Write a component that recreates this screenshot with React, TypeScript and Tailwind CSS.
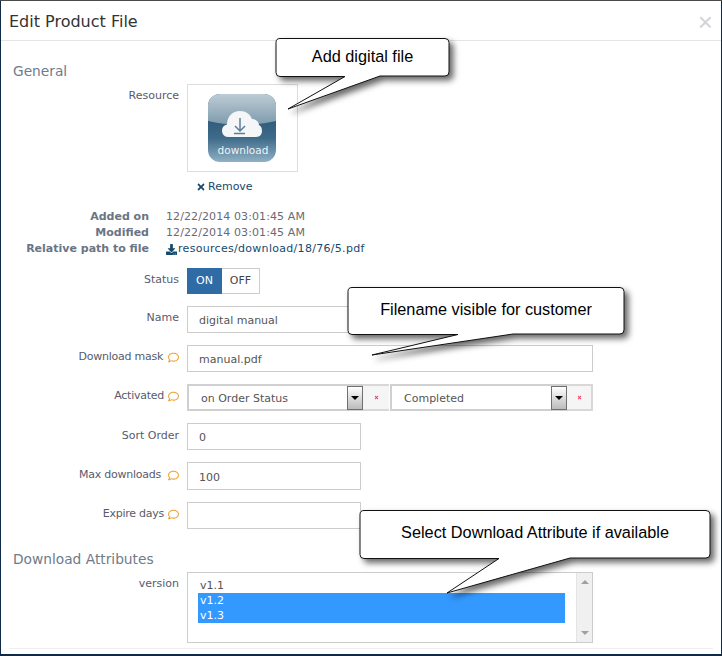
import type { ReactNode } from 'react'
import { FaDownload, FaRegComment, FaTimes } from 'react-icons/fa'

function Row({ label, hint, className, children }: { label?: string; hint?: string; className?: string; children: ReactNode }) {
  return (
    <div className={`flex ${className ?? ''}`}>
      <div className={`w-[173px] pr-[8px] h-[24px] flex items-center justify-end text-[#585b6d] shrink-0 ${hint ? 'tracking-[-0.25px]' : ''}`}>
        {label}
        {hint && <FaRegComment className={`text-[#f2a33a] ${hint}`} size={11} />}
      </div>
      {children}
    </div>
  )
}

function Input({ value, className }: { value?: string; className?: string }) {
  return (
    <div className={`h-[27px] border border-[#ccc] flex items-center px-[11px] pt-[4px] text-[#555] ${className ?? ''}`}>
      {value}
    </div>
  )
}

function SelectBox({ value, className }: { value: string; className: string }) {
  return (
    <div className={`h-[27px] border-2 border-[#d0d0d0] border-r-0 flex items-center pl-[12px] pt-[4px] text-[#555] relative ${className}`}>
      {value}
      <div className="absolute right-0 top-0 w-[16px] h-[24px] border border-[#707070] bg-gradient-to-b from-white to-[#bbb] flex items-center justify-center">
        <div className="w-0 h-0 border-x-[4px] border-x-transparent border-t-[4px] border-t-black" />
      </div>
    </div>
  )
}

function ClearCell({ className }: { className: string }) {
  return (
    <div className={`h-[27px] bg-[#f5f5f5] border-y-2 border-[#d8d8d8] flex items-center justify-center ${className}`}>
      <FaTimes className="text-[#f04060]" size={5} />
    </div>
  )
}

function DownloadIcon() {
  return (
    <svg width="68" height="68" viewBox="0 0 68 68" className="block">
      <defs>
        <linearGradient id="iconBg" x1="0" y1="0" x2="0" y2="1">
          <stop offset="0.3" stopColor="#2c5675" />
          <stop offset="0.65" stopColor="#3f6b8a" />
          <stop offset="1" stopColor="#8fb0c4" />
        </linearGradient>
        <linearGradient id="iconGloss" x1="0" y1="0" x2="0" y2="1">
          <stop offset="0" stopColor="#bdccd5" />
          <stop offset="1" stopColor="#7d9aac" />
        </linearGradient>
      </defs>
      <rect width="68" height="68" rx="12" fill="url(#iconBg)" />
      <path d="M12 0H56A12 12 0 0 1 68 12V27Q34 35 0 27V12A12 12 0 0 1 12 0z" fill="url(#iconGloss)" />
      <path d="M20 43c-4 0-6-3-6-6.500 0-3 2-5.500 5-6C19 23 24 17 32 17c6 0 10 3 12 8 4 0 7 3 7 6 2 1 3 3 3 6 0 3-2 6-6 6z" fill="#f4f6f8" />
      <path d="M32 24v13M27 32l5 5 5-5M26 39.500h11" fill="none" stroke="#5d7f96" strokeWidth="1.500" />
      <text x="35" y="60" textAnchor="middle" fontSize="10.500" fontWeight="500" fill="#eef3f6" fontFamily="'DejaVu Sans', sans-serif">download</text>
    </svg>
  )
}

function Callout({ text, left, top, width, height, tail, textClass }: { text: string; left: number; top: number; width: number; height: number; tail: [number, number, number, number]; textClass: string }) {
  const [x1, x2, tipX, tipY] = tail
  const d = `M5 .5H${width - 5}a4 4 0 0 1 4 4V${height - 5}a4 4 0 0 1-4 4H${x2}L${tipX} ${tipY}L${x1} ${height - 0.5}H5a4 4 0 0 1-4-4V4.500a4 4 0 0 1 4-4z`
  return (
    <div className="absolute" style={{ left, top, width, height }}>
      <svg width={width + 8} height={Math.max(tipY, height) + 10} className="absolute left-0 top-0 overflow-visible drop-shadow-[4px_4px_3px_rgba(0,0,0,0.6)]">
        <path d={d} fill="#fff" stroke="#111" strokeWidth="1" />
      </svg>
      <div className={`absolute inset-0 flex items-center justify-center font-['Liberation_Sans',sans-serif] text-[16.300px] text-black ${textClass}`}>
        {text}
      </div>
    </div>
  )
}

export default function App() {
  return (
    <div className="w-[722px] h-[656px] bg-[#0e2a47] relative overflow-hidden border-t border-[#4a4a4a] px-px">
      <div className="h-[653px] bg-white font-['DejaVu_Sans',sans-serif] text-[11px] text-[#585b6d] relative">
        {/* Header */}
        <div className="h-[40px] border-b border-[#e5e5e5] flex items-center justify-between pl-[8px] pr-[8px] pt-[2px]">
          <span className="text-[16px] text-[#333]">Edit Product File</span>
          <span className="text-[26px] leading-none text-[#d4d4d4] font-['Liberation_Sans',sans-serif]">×</span>
        </div>

        <div className="pl-[13px]">
          <h2 className="text-[13.750px] leading-[20px] text-[#6e7b8b] mt-[20px] -ml-px">General</h2>

          <Row label="Resource" className="mt-[3px]">
            <div>
              <div className="w-[111px] h-[88px] border border-[#ddd] pl-[20px] pt-[9px]">
                <DownloadIcon />
              </div>
              <div className="mt-[8px] pl-[9px] flex items-center text-[#15496d] h-[14px]">
                <FaTimes size={10} className="mr-[2px]" />
                Remove
              </div>
            </div>
          </Row>

          {/* File info */}
          <div className="mt-[15px] leading-[16px]">
            <div className="flex">
              <div className="w-[135px] text-right font-bold text-[#6a7484]">Added on</div>
              <div className="ml-[17px] text-[#6a6a74] tracking-[0.1px]">12/22/2014 03:01:45 AM</div>
            </div>
            <div className="flex">
              <div className="w-[135px] text-right font-bold text-[#6a7484]">Modified</div>
              <div className="ml-[17px] text-[#6a6a74] tracking-[0.1px]">12/22/2014 03:01:45 AM</div>
            </div>
            <div className="flex">
              <div className="w-[135px] text-right font-bold text-[#6a7484]">Relative path to file</div>
              <div className="ml-[17px] flex items-center text-[#15496d] tracking-[0.3px]">
                <FaDownload size={11} className="mr-[1px]" />
                resources/download/18/76/5.pdf
              </div>
            </div>
          </div>

          <Row label="Status" className="mt-[11px]">
            <div className="flex h-[26px]">
              <div className="w-[35px] bg-[#2f6ca6] text-white flex items-center justify-center">ON</div>
              <div className="w-[38px] border border-l-0 border-[#ccc] text-[#444] flex items-center justify-center">OFF</div>
            </div>
          </Row>

          <Row label="Name" className="mt-[12px]">
            <Input value="digital manual" className="w-[174px]" />
          </Row>

          <Row label="Download mask" hint="ml-[5px]" className="mt-[12px]">
            <Input value="manual.pdf" className="w-[406px]" />
          </Row>

          <Row label="Activated" hint="ml-[4px]" className="mt-[12px]">
            <div className="flex">
              <SelectBox value="on Order Status" className="w-[176px]" />
              <ClearCell className="w-[26px]" />
              <SelectBox value="Completed" className="w-[177px] ml-px" />
              <ClearCell className="w-[26px] border-r-2" />
            </div>
          </Row>

          <Row label="Sort Order" className="mt-[12px] pt-px">
            <Input value="0" className="w-[174px] -mt-px" />
          </Row>

          <Row label="Max downloads" hint="ml-[7px]" className="mt-[12px] pt-px">
            <Input value="100" className="w-[174px] h-[28px] -mt-px" />
          </Row>

          <Row label="Expire days" hint="ml-[4px]" className="mt-[12px]">
            <Input className="w-[174px]" />
          </Row>

          <h2 className="text-[13.750px] leading-[20px] text-[#6e7b8b] mt-[20px] -ml-px">Download Attributes</h2>

          <Row label="version" className="mt-[3px]">
            <div className="w-[406px] h-[71px] border border-[#ccc] flex">
              <div className="flex-1 pl-[10px] pt-[3px]">
                <div className="h-[17px] pl-[2px] pt-[3px] text-[#555] flex items-center">v1.1</div>
                <div className="h-[15px] pl-[2px] pt-[2px] bg-[#3399ff] text-white flex items-center">v1.2</div>
                <div className="h-[15px] pl-[2px] pt-[2px] bg-[#3399ff] text-white flex items-center">v1.3</div>
              </div>
              <div className="w-[11px]" />
              <div className="w-[16px] bg-[#f0f0f0] border-l border-[#e4e4e4] flex flex-col items-center justify-between py-[7px]">
                <div className="w-0 h-0 border-x-[4px] border-x-transparent border-b-[4px] border-b-[#a0a0a0]" />
                <div className="w-0 h-0 border-x-[4px] border-x-transparent border-t-[4px] border-t-[#a0a0a0]" />
              </div>
            </div>
          </Row>

          <div className="mt-[5px] ml-[-5px] w-[704px] border-t border-[#eee]" />
        </div>
      </div>

      <Callout text="Add digital file" left={275} top={37} width={175} height={39} tail={[70, 105, 13, 71]} textClass="pb-[2px]" />
      <Callout text="Filename visible for customer" left={347} top={286} width={278} height={48} tail={[111, 166, 25, 68]} textClass="pb-[4px]" />
      <Callout text="Select Download Attribute if available" left={359} top={509} width={352} height={49} tail={[140, 211, 88, 83]} textClass="pb-[4px]" />
    </div>
  )
}
